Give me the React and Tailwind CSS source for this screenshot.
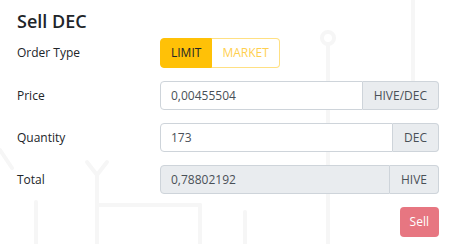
import React from "react";

function Bg() {
  return (
    <svg className="absolute inset-0 pointer-events-none" width="460" height="244" viewBox="0 0 460 244" fill="none">
      <g stroke="#f6f6f6" strokeWidth="4" strokeLinecap="round">
        <line x1="328" y1="45" x2="328" y2="244" />
        <circle cx="328" cy="38" r="6" />
        <line x1="413" y1="0" x2="413" y2="80" />
        <line x1="97" y1="175" x2="97" y2="244" />
        <path d="M87 162 L97 175 L107 162" />
        <line x1="97" y1="205" x2="200" y2="205" />
        <line x1="200" y1="205" x2="200" y2="244" />
        <line x1="245" y1="212" x2="245" y2="244" />
        <line x1="36" y1="202" x2="36" y2="244" />
        <path d="M0 150 L12 168" />
      </g>
    </svg>
  );
}

function Row({ label, children, h }) {
  return (
    <div className={`flex items-center ${h}`}>
      <div className="w-[143px] text-[#212529]">{label}</div>
      <div className="flex-1">{children}</div>
    </div>
  );
}

function InputGroup({ value, unit, disabled }) {
  return (
    <div className="flex h-[29px] w-full">
      <div
        className={`flex-1 flex items-center px-[10px] border border-[#ced4da] rounded-l-[4px] text-[#495057] ${
          disabled ? "bg-[#e9ecef]" : "bg-white"
        }`}
      >
        {value}
      </div>
      <div className="flex items-center px-[11px] border border-l-0 border-[#ced4da] rounded-r-[4px] bg-[#e9ecef] text-[#495057]">
        {unit}
      </div>
    </div>
  );
}

export default function App() {
  return (
    <div
      className="relative w-[460px] h-[244px] bg-white overflow-hidden text-[12px]"
      style={{ fontFamily: '"Open Sans", "Noto Sans", sans-serif' }}
    >
      <Bg />
      <div className="relative pl-[17px] pr-[21px] pt-[9px]">
        <h2 className="text-[18px] leading-[25px] font-semibold text-[#212529] mb-[4px]">Sell DEC</h2>
        <div className="flex flex-col gap-[13px]">
          <Row label="Order Type" h="h-[30px]">
            <div className="flex h-[30px]">
              <div className="flex items-center px-[10px] bg-[#ffc107] border border-[#ffc107] rounded-l-[4px] text-[#212529]">
                LIMIT
              </div>
              <div className="flex items-center px-[10px] bg-white border border-l-0 border-[#ffe083] rounded-r-[4px] text-[#ffd04f]">
                MARKET
              </div>
            </div>
          </Row>
          <Row label="Price" h="h-[29px]">
            <InputGroup value="0,00455504" unit="HIVE/DEC" />
          </Row>
          <Row label="Quantity" h="h-[29px]">
            <InputGroup value="173" unit="DEC" />
          </Row>
          <Row label="Total" h="h-[29px]">
            <InputGroup value="0,78802192" unit="HIVE" disabled />
          </Row>
          <div className="flex justify-end">
            <div className="h-[30px] flex items-center px-[10px] bg-[#e77681] rounded-[4px] text-white">Sell</div>
          </div>
        </div>
      </div>
    </div>
  );
}
